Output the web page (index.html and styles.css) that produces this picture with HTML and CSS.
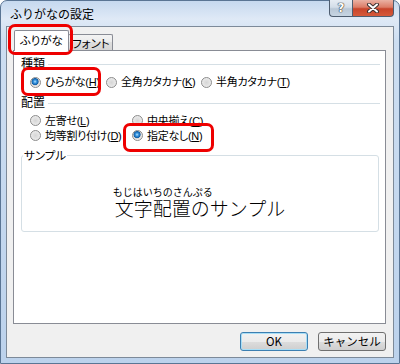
FILE: index.html
```html
<!DOCTYPE html>
<html lang="ja">
<head>
<meta charset="utf-8">
<title>ふりがなの設定</title>
<link rel="stylesheet" href="styles.css">
</head>
<body>
<div class="window">
  <div class="titlebar">
    <span class="title">ふりがなの設定</span>
    <div class="caption">
      <div class="cbtn help"><span>?</span></div>
      <div class="cbtn close">
        <svg width="14" height="10" viewBox="0 0 14 10"><path d="M3 1.5 L11 8.5 M11 1.5 L3 8.5" stroke="#3b3030" stroke-width="4" stroke-linecap="round"/><path d="M3 1.5 L11 8.5 M11 1.5 L3 8.5" stroke="#fff" stroke-width="2" stroke-linecap="round"/></svg>
      </div>
    </div>
  </div>
  <div class="client">
    <div class="tabs">
      <div class="tab active hl-tab">ふりがな</div>
      <div class="tab">フォント</div>
    </div>
    <div class="panel">
      <div class="ghead"><span>種類</span></div>
      <div class="row1">
        <label class="ritem hl-1"><span class="radio checked"></span><span>ひらがな(<u>H</u>)</span></label>
        <label class="ritem"><span class="radio"></span><span>全角カタカナ(<u>K</u>)</span></label>
        <label class="ritem"><span class="radio"></span><span>半角カタカナ(<u>T</u>)</span></label>
      </div>
      <div class="ghead gh2"><span>配置</span></div>
      <div class="grid2">
        <label class="ritem"><span class="radio"></span><span>左寄せ(<u>L</u>)</span></label>
        <label class="ritem"><span class="radio"></span><span>中央揃え(<u>C</u>)</span></label>
        <label class="ritem"><span class="radio"></span><span>均等割り付け(<u>D</u>)</span></label>
        <label class="ritem hl-2"><span class="radio checked"></span><span>指定なし(<u>N</u>)</span></label>
      </div>
      <fieldset class="sample">
        <legend>サンプル</legend>
        <div class="stext">
          <div class="sblock">
            <div class="ruby">もじはいちのさんぷる</div>
            <div class="main">文字配置のサンプル</div>
          </div>
        </div>
      </fieldset>
    </div>
    <div class="btns">
      <button class="btn default">OK</button>
      <button class="btn">キャンセル</button>
    </div>
  </div>
</div>
</body>
</html>
```
FILE: styles.css
```css
body {
  margin: 0;
  font-family: "Noto Sans CJK JP", "Liberation Sans", sans-serif;
  font-size: 12px;
  color: #000;
}
.window {
  width: 400px;
  height: 364px;
  box-sizing: border-box;
  border: 1px solid #5a7594;
  border-radius: 7px 7px 0 0;
  background: linear-gradient(to bottom, #c6d9ef 0, #dfe9f6 18px, #cddef1 40px, #bcd2ec 100%);
  padding: 0 5px 5px;
  display: flex;
  flex-direction: column;
}
.titlebar {
  height: 25px;
  display: flex;
  align-items: flex-start;
}
.title {
  padding-left: 4px;
  line-height: 25px;
}
.caption {
  margin-left: auto;
  display: flex;
  margin-top: -1px;
}
.cbtn {
  height: 17px;
  box-sizing: border-box;
  border: 1px solid #4e5d70;
  border-top: none;
  display: flex;
  align-items: center;
  justify-content: center;
}
.help {
  width: 23px;
  border-right: none;
  border-radius: 0 0 0 4px;
  background: linear-gradient(to bottom, #e6ecf3 0, #d3dde8 45%, #b9c7d6 55%, #c7d5e3 100%);
}
.help span {
  color: #fff;
  font-family: "DejaVu Sans", sans-serif;
  font-weight: bold;
  font-size: 12px;
  line-height: 14px;
  text-shadow: 0 0 1px #333, 0 0 1px #333, 0 0 1px #333;
}
.close {
  width: 42px;
  border-radius: 0 0 4px 0;
  background: linear-gradient(to bottom, #eab1a4 0, #dc7c67 45%, #c8442b 55%, #d65a3b 100%);
}
.close svg { display: block; }
.client {
  height: 332px;
  box-sizing: border-box;
  border: 1px solid #7d8a99;
  background: #f0f0f0;
  padding: 3px 7px 0 6px;
}
.tabs {
  display: flex;
  align-items: flex-end;
  height: 20px;
  padding-left: 1px;
  font-feature-settings: "palt";
}
.tab {
  width: 45px;
  height: 16px;
  margin-left: -1px;
  box-sizing: border-box;
  border: 1px solid #898c95;
  border-bottom: none;
  border-radius: 2px 2px 0 0;
  background: linear-gradient(to bottom, #f3f3f3 0, #ebebeb 50%, #dedede 50%, #d6d6d6 100%);
  padding-left: 3px;
  line-height: 16px;
  white-space: nowrap;
  font-size: 11.5px;
}
.tab.active {
  width: 55px;
  height: 21px;
  margin-left: 0;
  margin-bottom: -1px;
  background: #fff;
  padding-left: 5px;
  line-height: 19px;
  position: relative;
  z-index: 2;
}
.panel {
  height: 274px;
  box-sizing: border-box;
  border: 1px solid #898c95;
  background: #fff;
  padding: 5px 5px 0 7px;
}
.ghead {
  display: flex;
  align-items: center;
  height: 14px;
  line-height: 14px;
}
.ghead::after {
  content: "";
  flex: 1;
  border-top: 1px solid #d5dfe5;
  margin-left: 3px;
  margin-top: 2px;
}
.gh2 { margin-top: 6px; }
.row1 {
  display: grid;
  grid-template-columns: 76px 95px auto;
  margin-top: 5px;
  padding-left: 9px;
  height: 14px;
}
.ritem {
  display: inline-flex;
  align-items: center;
  gap: 4px;
  line-height: 14px;
  justify-self: start;
  position: relative;
  white-space: nowrap;
  font-family: "Liberation Sans", "Noto Sans CJK JP", sans-serif;
  font-size: 11px;
  letter-spacing: -0.3px;
  font-feature-settings: "palt";
}
.ritem u { text-underline-offset: 1px; }
.grid2 {
  display: grid;
  grid-template-columns: 102px auto;
  grid-auto-rows: 15px;
  margin-top: 4px;
  padding-left: 9px;
}
.radio {
  width: 11px;
  height: 11px;
  box-sizing: border-box;
  border-radius: 50%;
  border: 1px solid #8c8c8c;
  background: radial-gradient(circle at 50% 50%, #d6d6d6 0, #e4e4e4 50%, #f6f6f6 100%);
  flex: none;
}
.radio.checked {
  background: radial-gradient(circle at 45% 40%, #b9e4ff 0, #3b97e0 1.5px, #0f5ea8 3.2px, #cfcfcf 3.8px, #e6e6e6 60%, #f6f6f6 100%);
}
.hl-1::after,
.hl-2::after,
.hl-tab::after {
  content: "";
  position: absolute;
  border: 3px solid #ee0000;
  border-radius: 7px;
  box-sizing: border-box;
  pointer-events: none;
}
.hl-1::after { left: -9px; top: -8px; width: 80px; height: 29px; }
.hl-2::after { left: -9px; top: -5px; width: 91px; height: 29px; }
.hl-tab::after { left: -7px; top: -7px; width: 65px; height: 31px; }
.sample {
  margin: 6px 1px 0 0;
  padding: 0;
  border: 1px solid #d5dfe5;
  border-radius: 3px;
  height: 83px;
  box-sizing: border-box;
  min-width: 0;
}
.sample legend {
  padding: 0 1px;
  margin-left: 1px;
  line-height: 12px;
  font-size: 11.5px;
  font-feature-settings: "palt";
}
.stext {
  text-align: center;
  padding-top: 25px;
}
.sblock {
  display: inline-block;
  text-align: left;
}
.ruby {
  font-size: 10px;
  line-height: 12px;
  margin-left: -2px;
}
.main {
  font-size: 19px;
  line-height: 20px;
  font-weight: 300;
}
.btns {
  display: flex;
  justify-content: flex-end;
  gap: 10px;
  margin-top: 8px;
}
.btn {
  width: 68px;
  height: 19px;
  box-sizing: border-box;
  border: 1px solid #707070;
  border-radius: 3px;
  background: linear-gradient(to bottom, #f2f2f2 0, #ebebeb 50%, #dddddd 50%, #cfcfcf 100%);
  font: inherit;
  font-size: 11.5px;
  color: #000;
  padding: 0;
  line-height: 17px;
}
.btn.default {
  border-color: #3c7fb1;
  box-shadow: inset 0 0 0 1px #a8def6;
}
```
